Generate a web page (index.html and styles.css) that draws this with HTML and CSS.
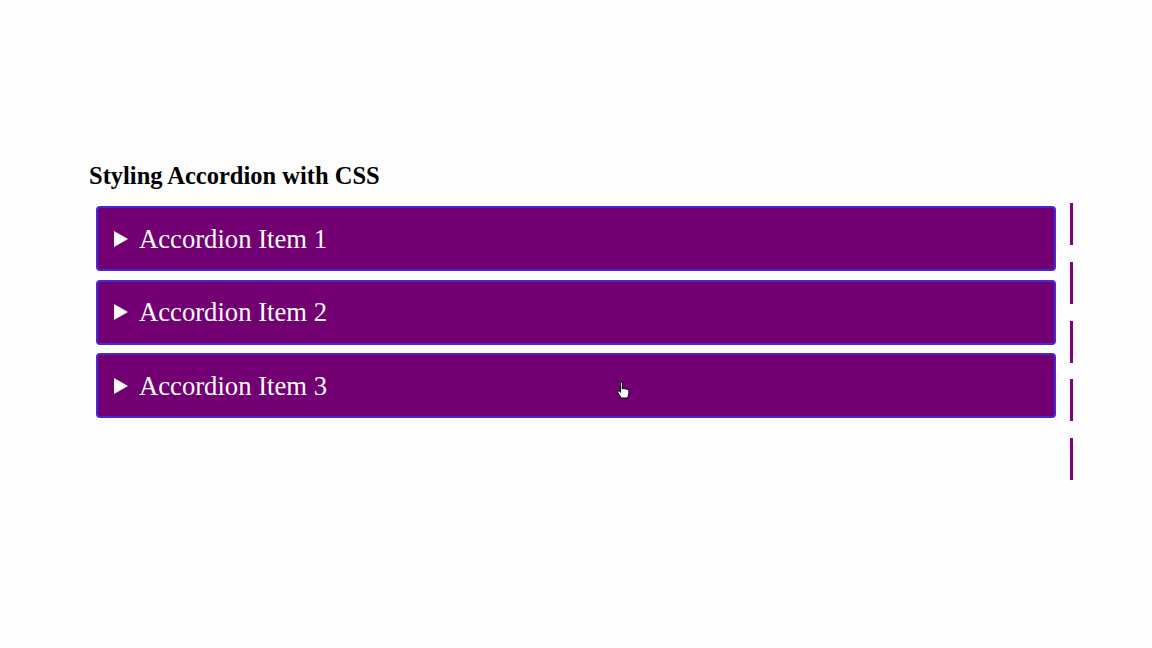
FILE: index.html
```html
<!DOCTYPE html>
<html lang="en">
<head>
<meta charset="utf-8">
<title>Styling Accordion with CSS</title>
<link rel="stylesheet" href="styles.css">
</head>
<body>
<main class="page">
  <h2 class="title">Styling Accordion with CSS</h2>
  <div class="row">
    <div class="accordion">
      <div class="item"><span class="marker"></span><span class="label">Accordion Item 1</span></div>
      <div class="item"><span class="marker"></span><span class="label">Accordion Item 2</span></div>
      <div class="item"><span class="marker"></span><span class="label">Accordion Item 3</span></div>
    </div>
    <div class="dashes"></div>
  </div>
  <svg class="cursor" width="16" height="20" viewBox="0 0 16 20" aria-hidden="true">
    <path d="M5 1.5c.8 0 1.4.6 1.4 1.4V9l.2-.1c.4-.6 1.8-.6 2.2.2.5-.5 1.7-.4 2 .4.6-.3 1.7 0 1.900.9.2 1 .2 3-.2 4.5L11.6 18H5.2L2 12.8c-.5-.8-.2-1.6.5-1.8.6-.2 1.1 0 1.5.5l.6.9V2.9c0-.8.6-1.4 1.4-1.4z" fill="#fff" stroke="#000" stroke-width="1"/>
  </svg>
</main>
</body>
</html>
```

FILE: styles.css
```css
html, body {
  margin: 0;
  padding: 0;
  background: #fdfdfd;
}

.page {
  position: relative;
  width: 1152px;
  height: 648px;
  box-sizing: border-box;
  padding: 161px 0 0 89px;
  font-family: "Liberation Serif", "Times New Roman", serif;
}

.title {
  margin: 0 0 15px 0;
  font-size: 24.5px;
  line-height: 30px;
  font-weight: bold;
  color: #000;
}

.row {
  display: flex;
  align-items: flex-start;
}

.accordion {
  margin-left: 7px;
  width: 960px;
  display: flex;
  flex-direction: column;
  gap: 8.5px;
}

.item {
  box-sizing: border-box;
  height: 65px;
  border: 2px solid #4a26d4;
  border-radius: 4px;
  background: #730073;
  color: #fff;
  display: flex;
  align-items: center;
  padding-left: 16px;
  font-size: 26.67px;
  line-height: 61px;
}

.label {
  padding-top: 1.5px;
}

.marker {
  width: 0;
  height: 0;
  border-top: 8px solid transparent;
  border-bottom: 8px solid transparent;
  border-left: 14px solid #fff;
  margin-right: 11px;
}

.dashes {
  margin-left: 14px;
  margin-top: -3px;
  width: 3px;
  height: 277px;
  background: repeating-linear-gradient(to bottom, #800080 0 42px, transparent 42px 58.75px);
}

.cursor {
  position: absolute;
  left: 616px;
  top: 380px;
}
```
